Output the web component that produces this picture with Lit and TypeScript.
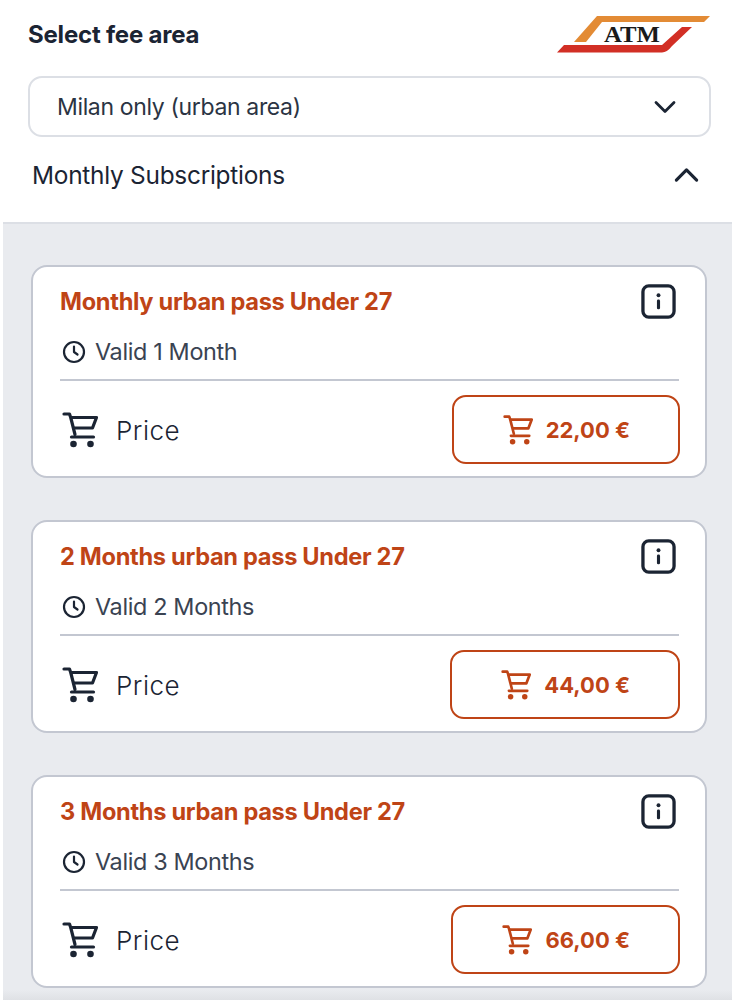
import { LitElement, html, css, svg } from "lit";
import { customElement } from "lit/decorators.js";

const passes = [
  { title: "Monthly urban pass Under 27", valid: "Valid 1 Month", price: "22,00 €" },
  { title: "2 Months urban pass Under 27", valid: "Valid 2 Months", price: "44,00 €" },
  { title: "3 Months urban pass Under 27", valid: "Valid 3 Months", price: "66,00 €" },
];

const cartIcon = svg`
  <path d="M2 2h5.5l1.2 3.5L13 22.5" fill="none" stroke="currentColor" stroke-width="3.2" stroke-linejoin="round" stroke-linecap="round" />
  <path d="M8.5 5.5H34.5L30.5 16H12" fill="none" stroke="currentColor" stroke-width="3.2" stroke-linejoin="round" />
  <path d="M9.5 25H31.5" fill="none" stroke="currentColor" stroke-width="3.2" stroke-linecap="round" />
  <circle cx="11.5" cy="32" r="3.3" fill="currentColor" />
  <circle cx="28.5" cy="32" r="3.3" fill="currentColor" />
`;

@customElement("app-root")
export class AppRoot extends LitElement {
  static styles = css`
    :host {
      display: block;
      width: 732px;
      height: 1000px;
      overflow: hidden;
      background: #fff;
      color: #1b2433;
      font-family: Inter, "Noto Sans", sans-serif;
    }

    .top {
      padding: 15px 21px 0 28px;
    }

    .heading {
      display: flex;
      justify-content: space-between;
      align-items: center;
      height: 38px;
    }

    .heading h1 {
      margin: 0;
      font-size: 24px;
      font-weight: 700;
      letter-spacing: -0.2px;
    }

    .logo {
      width: 154px;
      height: 38px;
      display: block;
    }

    .logo text {
      font-family: "Liberation Serif", serif;
      font-weight: 700;
      font-size: 23px;
      fill: #1a1a1a;
    }

    .select {
      margin-top: 23px;
      height: 61px;
      box-sizing: border-box;
      border: 2px solid #dcdfe5;
      border-radius: 14px;
      display: flex;
      align-items: center;
      justify-content: space-between;
      padding: 0 32px 0 27px;
      font-size: 23px;
      color: #2b3443;
      letter-spacing: -0.35px;
    }

    .chevron {
      width: 24px;
      height: 14px;
      display: block;
    }

    .section {
      display: flex;
      align-items: center;
      justify-content: space-between;
      height: 85px;
      padding: 0 11px 10px 4px;
      font-size: 24.4px;
      letter-spacing: -0.25px;
      box-sizing: border-box;
    }

    .section .chevron {
      width: 27px;
      height: 16px;
    }

    .panel {
      margin-left: 3px;
      border-top: 2px solid #dcdfe5;
      background: #e9ebef;
      padding: 41px 25px 0 28px;
      display: flex;
      flex-direction: column;
      gap: 42px;
      height: 776px;
      box-sizing: border-box;
    }

    .card {
      height: 213px;
      box-sizing: border-box;
      background: #fff;
      border: 2px solid #c3c7d1;
      border-radius: 16px;
      padding: 0 26px 0 27px;
      display: flex;
      flex-direction: column;
    }

    .title-row {
      display: flex;
      justify-content: space-between;
      align-items: center;
      height: 68px;
      padding-right: 3px;
    }

    .title-row h2 {
      margin: 0;
      font-size: 23.6px;
      font-weight: 700;
      color: #bf4416;
      letter-spacing: -0.3px;
    }

    .info {
      width: 35px;
      height: 35px;
      display: block;
    }

    .valid {
      display: flex;
      align-items: center;
      gap: 9px;
      height: 46px;
      box-sizing: border-box;
      border-bottom: 2px solid #c3c7d1;
      padding: 0 0 11px 2px;
      font-size: 23.4px;
      color: #3a4352;
      letter-spacing: -0.35px;
    }

    .clock {
      width: 24px;
      height: 24px;
      display: block;
    }

    .price-row {
      display: flex;
      justify-content: space-between;
      align-items: center;
      padding-top: 14px;
    }

    .label {
      display: flex;
      align-items: center;
      gap: 18px;
      padding-left: 2px;
      font-size: 26px;
      font-weight: 300;
      letter-spacing: 0.5px;
    }

    .label span {
      padding-top: 2px;
    }

    .cart {
      width: 36px;
      height: 36px;
      display: block;
    }

    .buy {
      display: flex;
      align-items: center;
      gap: 13px;
      height: 69px;
      box-sizing: border-box;
      padding: 0 48px 0 49px;
      margin-right: -1px;
      background: #fff;
      border: 2px solid #bf4416;
      border-radius: 14px;
      color: #bf4416;
      font: inherit;
      font-size: 22px;
      font-weight: 700;
    }

    .buy .cart {
      width: 30px;
      height: 30px;
    }

    .fade {
      position: absolute;
      left: 3px;
      right: 0;
      top: 990px;
      height: 10px;
      background: linear-gradient(#e9ebef, #dfe1e5);
    }
  `;

  private renderCard(p: (typeof passes)[number]) {
    return html`
      <article class="card">
        <div class="title-row">
          <h2>${p.title}</h2>
          <svg class="info" viewBox="0 0 36 36">
            <rect x="2" y="2" width="32" height="32" rx="6" fill="none" stroke="#1b2433" stroke-width="3.4" />
            <circle cx="18" cy="11.5" r="2" fill="#1b2433" />
            <rect x="16.4" y="16" width="3.2" height="10" rx="1.4" fill="#1b2433" />
          </svg>
        </div>
        <div class="valid">
          <svg class="clock" viewBox="0 0 24 24" fill="none" stroke="#1b2433" stroke-width="2.2" stroke-linecap="round" stroke-linejoin="round">
            <circle cx="12" cy="12" r="10" />
            <path d="M12 6.5V12l3.5 2.5" />
          </svg>
          <span>${p.valid}</span>
        </div>
        <div class="price-row">
          <div class="label">
            <svg class="cart" viewBox="0 0 36 36">${cartIcon}</svg>
            <span>Price</span>
          </div>
          <button class="buy">
            <svg class="cart" viewBox="0 0 36 36">${cartIcon}</svg>
            <span>${p.price}</span>
          </button>
        </div>
      </article>
    `;
  }

  render() {
    return html`
      <div class="top">
        <div class="heading">
          <h1>Select fee area</h1>
          <svg class="logo" viewBox="0 0 154 38">
            <path d="M17 27 L40 1 H153 L147 7 H45 L29 27 Z" fill="#e38b35" />
            <path d="M0 37.5 L7 30 H105 L125 12 H135 L115 31 Q110 37.5 105 37.5 Z" fill="#d22f25" />
            <text x="47" y="27" textLength="56" lengthAdjust="spacingAndGlyphs">ATM</text>
          </svg>
        </div>
        <div class="select">
          <span>Milan only (urban area)</span>
          <svg class="chevron" viewBox="0 0 24 14" fill="none" stroke="#1b2433" stroke-width="2.8" stroke-linecap="round" stroke-linejoin="round">
            <path d="M3 2.5l9 9 9-9" />
          </svg>
        </div>
        <div class="section">
          <span>Monthly Subscriptions</span>
          <svg class="chevron" viewBox="0 0 24 14" fill="none" stroke="#1b2433" stroke-width="2.8" stroke-linecap="round" stroke-linejoin="round">
            <path d="M3 11.5l9-9 9 9" />
          </svg>
        </div>
      </div>
      <div class="panel">${passes.map((p) => this.renderCard(p))}</div>
      <div class="fade"></div>
    `;
  }
}
